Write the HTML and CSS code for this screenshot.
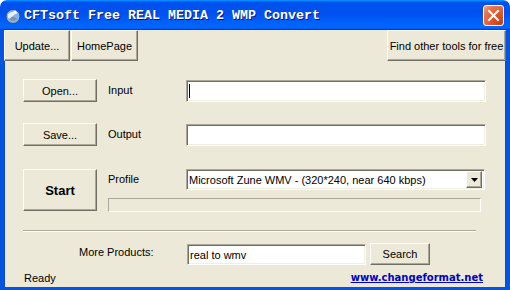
FILE: index.html
```html
<!DOCTYPE html>
<html lang="en">
<head>
  <meta charset="UTF-8">
  <title>CFTsoft Free REAL MEDIA 2 WMP Convert</title>
  <link rel="stylesheet" href="styles.css">
</head>
<body>
  <div class="window">
    <div class="titlebar">
      <svg class="app-icon" width="16" height="16" viewBox="0 0 16 16">
        <circle cx="8" cy="8.5" r="7" fill="#7fb2e8" stroke="#2b4f93" stroke-width="1"/>
        <path d="M3 6 Q8 2 13 5 Q9 6 7 9 Q5 11 3 10 Z" fill="#e8eef6"/>
        <path d="M6 9 Q9 8 12 11 Q9 14 5 12 Z" fill="#8a8f99"/>
        <circle cx="10" cy="4" r="1.5" fill="#ffffff"/>
      </svg>
      <span class="title">CFTsoft Free REAL MEDIA 2 WMP Convert</span>
      <button class="close">
        <svg width="13" height="13" viewBox="0 0 13 13">
          <path d="M2 2 L11 11 M11 2 L2 11" stroke="#fff" stroke-width="2" stroke-linecap="square"/>
        </svg>
      </button>
    </div>

    <div class="client">
      <!-- top buttons -->
      <div class="toolbar">
        <button class="btn tool update">Update...</button>
        <button class="btn tool home">HomePage</button>
        <button class="btn tool find">Find other tools for free</button>
      </div>

      <!-- input / output -->
      <div class="file-row first">
        <button class="btn action">Open...</button>
        <span class="label">Input</span>
        <div class="edit path"><span class="caret"></span></div>
      </div>
      <div class="file-row second">
        <button class="btn action">Save...</button>
        <span class="label">Output</span>
        <div class="edit path"></div>
      </div>

      <!-- profile and start -->
      <div class="start-row">
        <button class="btn start">Start</button>
        <div class="profile-box">
          <div class="profile-line">
            <span class="label">Profile</span>
            <div class="select">
              <span class="select-text">Microsoft Zune WMV - (320*240, near 640 kbps)</span>
              <span class="drop">
                <svg width="7" height="4" viewBox="0 0 7 4"><path d="M0 0 H7 L3.5 4 Z" fill="#000"/></svg>
              </span>
            </div>
          </div>
          <div class="progress"></div>
        </div>
      </div>

      <div class="separator"></div>

      <!-- more products -->
      <div class="products-row">
        <span class="products-label">More Products:</span>
        <div class="edit search-box">real to wmv</div>
        <button class="btn search">Search</button>
      </div>

      <div class="status">
        <span>Ready</span>
        <a class="site-link" href="#">www.changeformat.net</a>
      </div>
    </div>
  </div>
</body>
</html>
```

FILE: styles.css
```css
body {
  margin: 0;
  background-color: #ffffff;
  font-family: "Liberation Sans", Arial, sans-serif;
  font-size: 11px;
  color: #000;
}

.window {
  width: 510px;
  height: 290px;
  overflow: hidden;
}

.titlebar {
  height: 30px;
  display: flex;
  align-items: center;
  padding: 0 5px 0 5px;
  box-sizing: border-box;
  border-radius: 7px 7px 0 0;
  background: linear-gradient(180deg, #0997ff, #0053ee 8%, #0050ee 40%, #0066ff 88%, #0066ff 93%, #005bff 95%, #003dd7 96%, #003dd7);
}

.app-icon {
  flex: none;
  margin-top: 1px;
}

.title {
  margin-left: 3px;
  font-family: "Liberation Mono", "Courier New", monospace;
  font-weight: bold;
  font-size: 13.33px;
  color: #fff;
  text-shadow: 1px 1px #0f1089;
  white-space: nowrap;
  margin-top: 1px;
}

.close {
  margin-left: auto;
  width: 21px;
  height: 21px;
  padding: 0;
  border: 1px solid #fff;
  border-radius: 3px;
  background: radial-gradient(circle at 85% 85%, #c8400f 0%, #e25a2c 45%, #ea7651 75%, #f4a98c 100%);
  display: flex;
  align-items: center;
  justify-content: center;
  margin-top: 1px;
  margin-right: 1px;
}

.client {
  height: 257px;
  background-color: #ece9d8;
  border-style: solid;
  border-width: 0 4px 3px 4px;
  border-color: #0553e1;
  box-shadow: inset 1px 0 #0a4ad0, inset -1px 0 #0a4ad0;
}

.btn {
  background-color: #ece9d8;
  border: 1px solid;
  border-color: #fff #716f64 #716f64 #fff;
  box-shadow: inset -1px -1px #aca899;
  padding: 0;
  font-family: "Liberation Sans", Arial, sans-serif;
  font-size: 11px;
  color: #000;
  cursor: pointer;
}

.toolbar {
  display: flex;
  height: 31px;
}

.tool {
  height: 31px;
}

.update {
  width: 66px;
}

.home {
  width: 67px;
  margin-left: 1px;
}

.find {
  width: 119px;
  margin-left: auto;
}

.file-row {
  display: flex;
  align-items: center;
  margin-left: 19px;
  height: 23px;
}

.file-row.first {
  margin-top: 18px;
}

.file-row.second {
  margin-top: 21px;
}

.action {
  width: 74px;
  height: 23px;
}

.label {
  width: 78px;
  margin-left: 11px;
  margin-top: -2px;
}

.edit {
  background-color: #fff;
  border: 1px solid;
  border-color: #aca899 #fff #fff #aca899;
  box-shadow: inset 1px 1px #716f64, inset -1px -1px #f1efe2;
  box-sizing: border-box;
}

.path {
  width: 300px;
  height: 22px;
  padding: 3px 0 0 2px;
}

.caret {
  display: block;
  width: 1px;
  height: 14px;
  background-color: #000;
}

.start-row {
  display: flex;
  margin: 23px 0 0 19px;
}

.start {
  width: 74px;
  height: 42px;
  font-size: 13px;
  font-weight: bold;
}

.profile-box {
  display: flex;
  flex-direction: column;
  gap: 8px;
}

.profile-line {
  display: flex;
  align-items: center;
}

.select {
  width: 299px;
  height: 21px;
  display: flex;
  align-items: center;
  background-color: #fff;
  border: 1px solid;
  border-color: #aca899 #fff #fff #aca899;
  box-shadow: inset 1px 1px #716f64, inset -1px -1px #f1efe2;
  box-sizing: border-box;
  padding: 2px 2px 2px 2px;
}

.select-text {
  flex: 1;
  white-space: nowrap;
}

.drop {
  width: 16px;
  height: 17px;
  box-sizing: border-box;
  background-color: #ece9d8;
  border: 1px solid;
  border-color: #fff #716f64 #716f64 #fff;
  box-shadow: inset -1px -1px #aca899;
  display: flex;
  align-items: center;
  justify-content: center;
}

.progress {
  width: 373px;
  height: 14px;
  margin-left: 11px;
  box-sizing: border-box;
  border: 1px solid;
  border-color: #aca899 #fff #fff #aca899;
}

.separator {
  width: 453px;
  margin: 18px 0 0 19px;
  border-top: 1px solid #aca899;
  border-bottom: 1px solid #fff;
}

.products-row {
  display: flex;
  align-items: center;
  margin: 11px 0 0 75px;
  height: 22px;
}

.products-label {
  width: 108px;
  margin-top: -5px;
}

.search-box {
  width: 179px;
  height: 21px;
  padding: 4px 0 0 2px;
  font-size: 11px;
}

.search {
  width: 60px;
  height: 22px;
  margin-left: 4px;
}

.status {
  display: flex;
  justify-content: space-between;
  align-items: center;
  height: 15px;
  margin-top: 5px;
  padding: 0 23px 0 20px;
}

.site-link {
  font-family: "DejaVu Sans", Verdana, sans-serif;
  font-size: 10px;
  font-weight: bold;
  color: #0000cc;
  text-decoration: underline;
}
```
